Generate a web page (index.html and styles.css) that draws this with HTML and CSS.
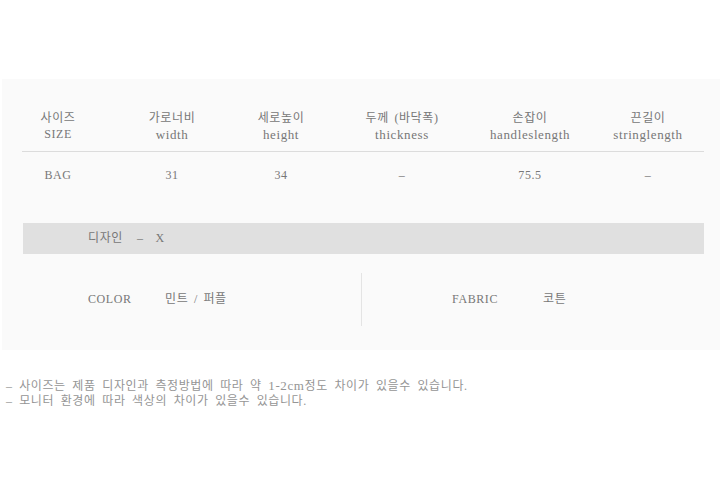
FILE: index.html
```html
<!DOCTYPE html>
<html lang="ko">
<head>
<meta charset="utf-8">
<link rel="stylesheet" href="styles.css">
</head>
<body>
<div class="panel">
  <div class="size-table">
    <div class="row head">
      <div class="cell"><span class="ko">사이즈</span><span>SIZE</span></div>
      <div class="cell"><span class="ko">가로너비</span><span class="en">width</span></div>
      <div class="cell"><span class="ko">세로높이</span><span class="en">height</span></div>
      <div class="cell"><span class="ko">두께 (바닥폭)</span><span class="en">thickness</span></div>
      <div class="cell"><span class="ko">손잡이</span><span class="en">handleslength</span></div>
      <div class="cell"><span class="ko">끈길이</span><span class="en">stringlength</span></div>
    </div>
    <div class="row body">
      <div class="cell">BAG</div>
      <div class="cell">31</div>
      <div class="cell">34</div>
      <div class="cell">–</div>
      <div class="cell">75.5</div>
      <div class="cell">–</div>
    </div>
  </div>
  <div class="design-bar"><span class="label">디자인</span><span class="dash">–</span><span>X</span></div>
  <div class="spec-row">
    <div class="spec left"><span class="key">COLOR</span><span class="val">민트 / 퍼플</span></div>
    <div class="spec right"><span class="key">FABRIC</span><span class="val">코튼</span></div>
  </div>
</div>
<div class="notes">
  <p>– 사이즈는 제품 디자인과 측정방법에 따라 약 <span class="en">1-2cm</span>정도 차이가 있을수 있습니다.</p>
  <p>– 모니터 환경에 따라 색상의 차이가 있을수 있습니다.</p>
</div>
</body>
</html>
```
FILE: styles.css
```css
html, body {
  margin: 0;
  padding: 0;
  background: #ffffff;
}
body {
  font-family: "Liberation Serif", "Noto Sans CJK KR", serif;
  font-size: 12px;
  letter-spacing: 0.6px;
  word-spacing: 2px;
  line-height: 15px;
  color: #777777;
}
.en {
  font-size: 13px;
}
.ko {
  line-height: 17px;
}
.panel {
  margin: 79px 2px 0 2px;
  background: #fafafa;
  padding: 31px 16px 24px 20px;
}
.size-table {
  width: 682px;
}
.row {
  display: grid;
  grid-template-columns: 72px 156px 62px 180px 76px 160px;
}
.row.head {
  border-bottom: 1px solid #dcdcdc;
  padding-bottom: 9px;
}
.row.body {
  padding-top: 16px;
}
.cell {
  display: flex;
  flex-direction: column;
  align-items: center;
  white-space: nowrap;
  justify-self: center;
}
.design-bar {
  margin-top: 40px;
  margin-left: 1px;
  width: 681px;
  height: 31px;
  background: #e0e0e0;
  display: flex;
  align-items: center;
  padding-left: 65px;
  box-sizing: border-box;
}
.design-bar .dash {
  margin: 0 12px 0 14px;
}
.spec-row {
  margin-top: 19px;
  display: flex;
  height: 53px;
}
.spec {
  display: flex;
  align-items: center;
}
.spec.left {
  width: 339px;
  padding-left: 66px;
  box-sizing: border-box;
}
.spec.right {
  border-left: 1px solid #e4e4e4;
  padding-left: 90px;
}
.spec.left .key { width: 77px; }
.spec.right .key { width: 91px; }
.notes {
  margin-top: 28px;
  padding-left: 6px;
  color: #959595;
  word-spacing: 3px;
}
.notes p {
  margin: 0;
}
```
